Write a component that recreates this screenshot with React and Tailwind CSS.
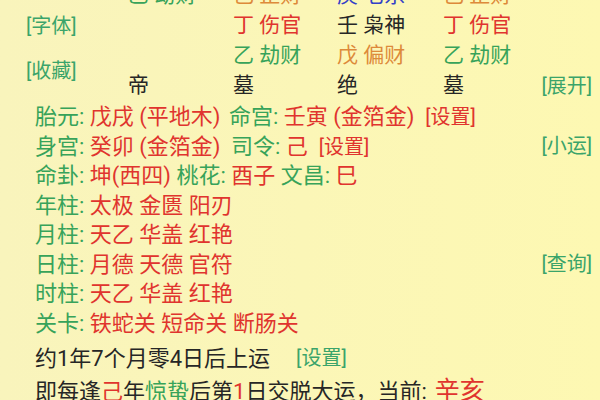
import React from 'react';

const G = ({ children, className = '' }) => <span className={`text-[#37a35a] ${className}`}>{children}</span>;
const R = ({ children }) => <span className="text-[#e0342e]">{children}</span>;
const Btn = ({ children, red, className = '' }) => (
  <span className={`text-[20px] ${red ? 'text-[#e0342e]' : 'text-[#3aa46a]'} ${className}`}>[{children}]</span>
);

// 十神 grid, 4 pillars x 4 rows
const grid = [
  [['乙 劫财', 'text-[#37a35a]'], ['己 正财', 'text-[#dd8a3a]'], ['庚 七杀', 'text-[#3340c8]'], ['己 正财', 'text-[#dd8a3a]']],
  [['', ''], ['丁 伤官', 'text-[#e0342e]'], ['壬 枭神', 'text-[#262626]'], ['丁 伤官', 'text-[#e0342e]']],
  [['', ''], ['乙 劫财', 'text-[#37a35a]'], ['戊 偏财', 'text-[#dd8a3a]'], ['乙 劫财', 'text-[#37a35a]']],
  [['帝', 'text-[#262626]'], ['墓', 'text-[#262626]'], ['绝', 'text-[#262626]'], ['墓', 'text-[#262626]']],
];

const shensha = [
  ['年柱', '太极 金匮 阳刃', null],
  ['月柱', '天乙 华盖 红艳', null],
  ['日柱', '月德 天德 官符', '查询'],
  ['时柱', '天乙 华盖 红艳', null],
  ['关卡', '铁蛇关 短命关 断肠关', null],
];

const Line = ({ children, right }) => (
  <div className="flex h-[29.5px] items-center justify-between pl-[35px]">
    <div className="whitespace-pre">{children}</div>
    {right && <Btn>{right}</Btn>}
  </div>
);

export default function App() {
  return (
    <div
      className="h-[400px] w-[600px] overflow-hidden bg-gradient-to-r from-[#f9f4bc] to-[#fdf8b2] pr-[8px] text-[22px] text-[#262626]"
      style={{ fontFamily: 'Roboto, "Noto Sans CJK SC", sans-serif' }}
    >
      <div className="mt-[-19px] flex">
        <div className="flex w-[128px] flex-col pl-[26px]">
          <div className="h-[30px]" />
          <div className="flex h-[30px] items-center"><Btn>字体</Btn></div>
          <div className="mt-[15px] flex h-[30px] items-center"><Btn>收藏</Btn></div>
        </div>
        <div className="grid grid-cols-[105px_104px_106px_90px]">
          {grid.map((row, i) =>
            row.map(([t, c], j) => (
              <div key={`${i}-${j}`} className={`flex h-[30px] items-center whitespace-pre text-[21px] ${c}`}>{t}</div>
            ))
          )}
        </div>
        <div className="flex flex-1 flex-col items-end">
          <div className="h-[90px]" />
          <div className="flex h-[30px] items-center"><Btn>展开</Btn></div>
        </div>
      </div>

      <div className="mt-[1px]">
        <Line>
          <G>胎元: </G><R>戊戌 (平地木) </R><G className="ml-[3px]">命宫: </G><R>壬寅 (金箔金)  </R><Btn red>设置</Btn>
        </Line>
        <Line right="小运">
          <G>身宫: </G><R>癸卯 (金箔金) </R><G className="ml-[5px]">司令: </G><R>己  </R><Btn red>设置</Btn>
        </Line>
        <Line>
          <G>命卦: </G><R>坤(西四) </R><G>桃花: </G><R>酉子 </R><G>文昌: </G><R>巳</R>
        </Line>
        {shensha.map(([k, v, r]) => (
          <Line key={k + v} right={r}>
            <G>{k}: </G><R>{v}</R>
          </Line>
        ))}
      </div>

      <div className="mt-[5px] flex h-[30px] items-center pl-[35px]">
        约1年7个月零4日后上运<Btn className="ml-[26px]">设置</Btn>
      </div>
      <div className="mt-[3px] flex h-[30px] items-center pl-[35px]">
        即每逢<R>己</R>年<G>惊蛰</G>后第<R>1</R>日交脱大运，当前: <span className="ml-[8px] text-[25px] text-[#e0342e]">辛亥</span>
      </div>
    </div>
  );
}
